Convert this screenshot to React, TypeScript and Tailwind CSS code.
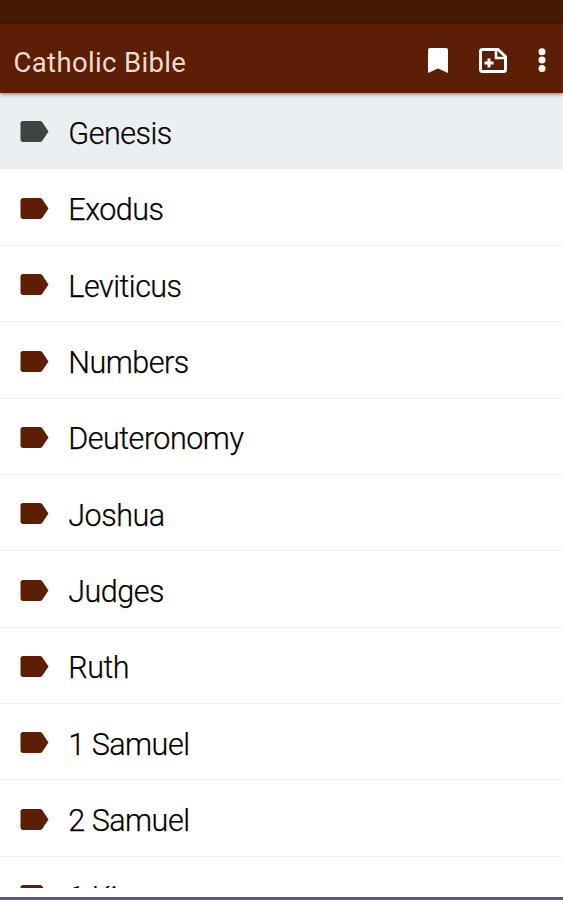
const books = [
  "Genesis",
  "Exodus",
  "Leviticus",
  "Numbers",
  "Deuteronomy",
  "Joshua",
  "Judges",
  "Ruth",
  "1 Samuel",
  "2 Samuel",
  "1 Kings",
]

function LabelIcon({ className }: { className: string }) {
  return (
    <svg viewBox="-0.5 0 29 21" className={`h-[21px] w-[29px] shrink-0 ${className}`} fill="currentColor">
      <path d="M2.5 0H19.4C20.4 0 21.2.4 21.8 1.2L28 10.5L21.8 19.8C21.2 20.6 20.4 21 19.4 21H2.5C1.1 21 0 19.9 0 18.5V2.5C0 1.1 1.1 0 2.5 0Z" />
    </svg>
  )
}

function Header() {
  return (
    <header className="relative z-10 flex h-[69px] items-center justify-between bg-[#5c1e04] pl-[13.5px] pr-[17px] shadow-[0_1px_4px_rgba(0,0,0,0.5)]">
      <h1 className="pt-[8px] text-[27.5px] leading-8 tracking-[0.35px] text-[#f0dad2]">Catholic Bible</h1>
      <div className="flex items-center pt-[4px] text-white">
        <button aria-label="Bookmarks" className="mr-[31px]">
          <svg viewBox="0 0 20 25" className="h-[25px] w-5" fill="currentColor">
            <path d="M2 0H18Q20 0 20 2V25L10 20.5L0 25V2Q0 0 2 0Z" />
          </svg>
        </button>
        <button aria-label="Add note" className="mr-[31px]">
          <svg viewBox="0 0 28 25" className="h-[25px] w-7" fill="none" stroke="currentColor">
            <path d="M3.5 1.5H19L26.5 8.5V21.5Q26.5 23.5 24.5 23.5H3.5Q1.5 23.5 1.5 21.5V3.5Q1.5 1.5 3.5 1.5Z" strokeWidth="3" strokeLinejoin="round" />
            <path d="M17 2V10H26" strokeWidth="2.6" />
            <path d="M10 10.5V19.5M5.5 15H14.5" strokeWidth="3" />
          </svg>
        </button>
        <button aria-label="More options">
          <svg viewBox="0 0 8 25" className="h-[25px] w-2" fill="currentColor">
            <circle cx="4" cy="3.8" r="3.5" />
            <circle cx="4" cy="12.1" r="3.5" />
            <circle cx="4" cy="20.5" r="3.5" />
          </svg>
        </button>
      </div>
    </header>
  )
}

export default function App() {
  return (
    <div className="flex h-[900px] w-full flex-col overflow-hidden bg-white font-[Roboto,sans-serif]">
      <div className="h-6 shrink-0 bg-[#451a04]" />
      <Header />
      <ul className="h-[795px] shrink-0 overflow-hidden">
        {books.map((book, i) => (
          <li
            key={book}
            className={`flex h-[76.39px] items-center border-b pl-[20px] ${
              i === 0 ? "border-[#ebeff2] bg-[#ebeff2]" : "border-[#f1f1f1]"
            }`}
          >
            <LabelIcon className={i === 0 ? "mt-[2.6px] text-[#3f4342]" : "mt-[2.6px] text-[#5c1e04]"} />
            <span className="ml-[19.3px] pt-[6.2px] text-[30.5px] font-light leading-9 tracking-[-0.5px] text-black [-webkit-text-stroke:0.25px_black]">{book}</span>
          </li>
        ))}
      </ul>
      <div className="mt-auto h-[3px] shrink-0 bg-[#6b4c94]" />
    </div>
  )
}
